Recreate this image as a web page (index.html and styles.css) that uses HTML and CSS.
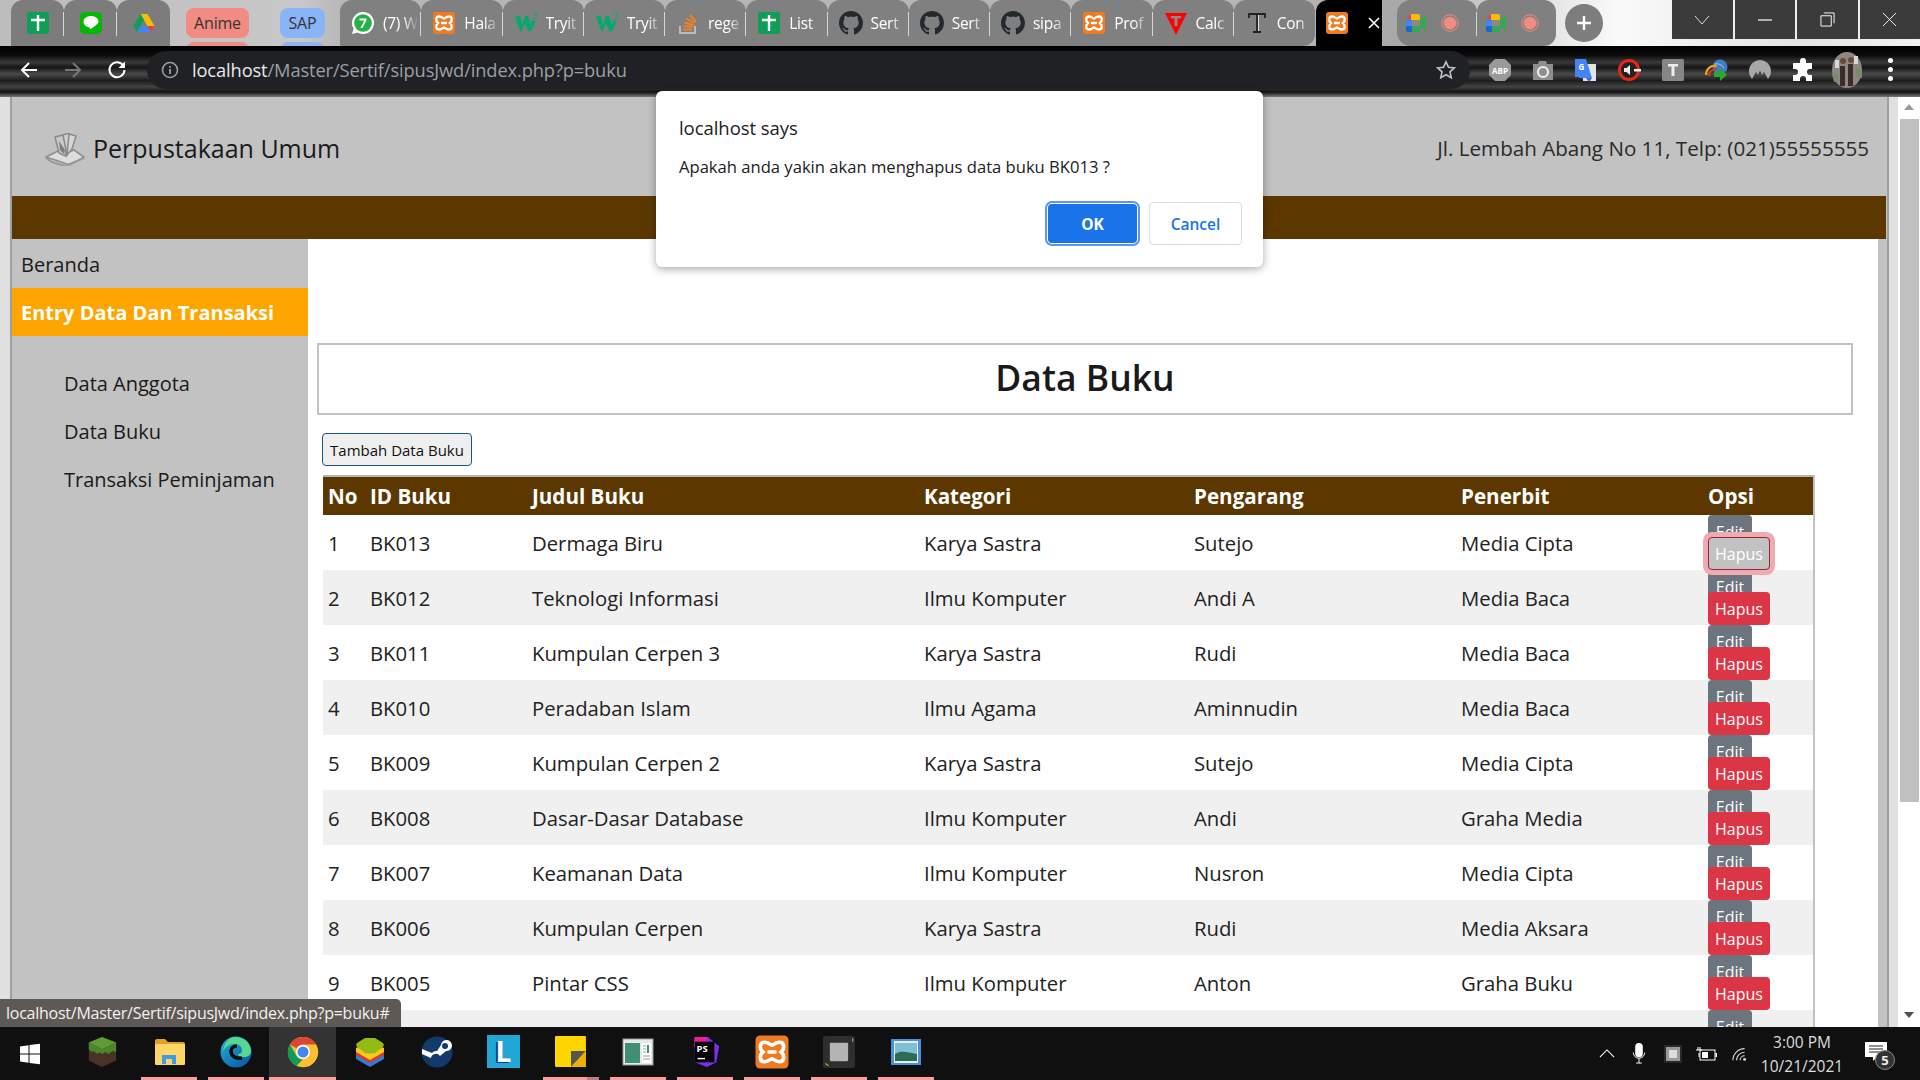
FILE: index.html
```html
<!DOCTYPE html>
<html lang="id">
<head>
<meta charset="utf-8">
<title>Perpustakaan Umum</title>
<link rel="stylesheet" href="styles.css">
</head>
<body>
<svg class="defs" aria-hidden="true">
  <symbol id="sheets" viewBox="0 0 24 24"><rect x="1" y="1" width="22" height="22" rx="2" fill="#0f9d58"/><path d="M12 4v16M5 9h14" stroke="#fff" stroke-width="2.4"/></symbol>
  <symbol id="xampp" viewBox="0 0 24 24"><rect x="1" y="1" width="22" height="22" rx="3" fill="#ef7a1f"/><path d="M7 5.500c3 0 4 2 5 2s2-2 5-2c3.500 0 3.500 4.500 1 6.500 2.500 2 2.500 6.500-1 6.500-3 0-4-2-5-2s-2 2-5 2c-3.500 0-3.500-4.500-1-6.500-2.500-2-2.500-6.500 1-6.500zM9 12h6" fill="none" stroke="#fff" stroke-width="2.400"/></symbol>
  <symbol id="github" viewBox="0 0 16 16"><path fill="#24292e" d="M8 0C3.58 0 0 3.58 0 8c0 3.54 2.290 6.530 5.470 7.590.4.070.55-.17.55-.38 0-.19-.01-.82-.01-1.490-2.010.37-2.530-.49-2.690-.94-.09-.23-.48-.94-.82-1.130-.28-.15-.68-.52-.01-.53.63-.01 1.080.58 1.230.82.72 1.210 1.870.87 2.330.66.070-.52.28-.87.51-1.070-1.780-.2-3.640-.89-3.640-3.950 0-.87.31-1.590.82-2.150-.08-.2-.36-1.020.08-2.120 0 0 .67-.21 2.200.82.64-.18 1.320-.27 2-.27s1.360.09 2 .27c1.530-1.040 2.200-.82 2.200-.82.44 1.100.16 1.920.08 2.120.51.56.82 1.270.82 2.150 0 3.070-1.870 3.750-3.650 3.950.29.25.54.73.54 1.480 0 1.070-.01 1.930-.01 2.200 0 .21.15.46.55.38A8.013 8.013 0 0016 8c0-4.420-3.580-8-8-8z"/></symbol>
  <symbol id="w3" viewBox="0 0 24 24"><path d="M1 5h5l2 9 3-9h3l3 9 1-5 4 1-5 10h-3l-3-8-3 8H6z" fill="#04aa6d"/><path d="M19 2h4v1l-2 1.500c1.500 0 2 1 1.500 2-.5 1-2 1-3 .5" fill="none" stroke="#04aa6d" stroke-width=".9"/></symbol>
  <symbol id="meet" viewBox="0 0 24 24"><path d="M2 8l5-5h9v6H8v6H2z" fill="#ea4335"/><path d="M2 8h6v7H2z" fill="#4285f4"/><path d="M2 15h6v6H4a2 2 0 01-2-2z" fill="#1967d2"/><path d="M8 15h8v6H8z" fill="#34a853"/><path d="M7 3h7a2 2 0 012 2v4H7z" fill="#fbbc04"/><path d="M16 9l6-5v16l-6-5z" fill="#34a853"/><rect x="8" y="9" width="8" height="6" fill="#8a8a8a"/></symbol>
  <symbol id="rec" viewBox="0 0 24 24"><circle cx="12" cy="12" r="11" fill="none" stroke="#f28b82" stroke-width="1.300"/><circle cx="12" cy="12" r="8.500" fill="#f28b82"/></symbol>
  <symbol id="chrome" viewBox="0 0 32 32"><circle cx="16" cy="16" r="15" fill="#fbc02d"/><path d="M16 1a15 15 0 0113 7.500H16a7.500 7.500 0 00-6.500 3.750L3 8.500A15 15 0 0116 1z" fill="#db4437"/><path d="M3 8.500l6.500 11.250A7.500 7.500 0 0016 23.500L9.500 30A15 15 0 013 8.500z" fill="#0f9d58"/><path d="M9.500 30l6.500-6.500a7.500 7.500 0 006.500-3.750L29 8.500A15 15 0 0114 31z" fill="#fbc02d"/><circle cx="16" cy="16" r="7" fill="#fff"/><circle cx="16" cy="16" r="5.500" fill="#4285f4"/></symbol>
</svg>

<div class="screen">
  <div class="tabstrip">
    <div class="tab pin"><svg class="fav"><use href="#sheets"/></svg></div>
    <div class="tab pin"><svg class="fav" viewBox="0 0 24 24"><rect x="1" y="1" width="22" height="22" rx="5" fill="#00b900"/><path d="M12 5c-4.500 0-7.500 2.600-7.500 5.800 0 3 2.500 5.200 6 5.700.6.100.3 1.600.6 1.800.4.200 4.400-2.500 6-4.200 1.500-1.400 2.400-2 2.400-3.300C19.500 7.600 16.500 5 12 5z" fill="#fff"/></svg></div>
    <div class="tab pin"><svg class="fav" viewBox="0 0 24 24"><path d="M8.500 3h7l7 12h-7z" fill="#fbbc04"/><path d="M8.500 3L1.500 15l3.500 6 7-12z" fill="#0f9d58"/><path d="M5 21h14l3.500-6h-14z" fill="#4285f4"/><path d="M15.500 15l3.500 6 3.500-6z" fill="#ea4335"/></svg></div>
    <div class="chips chips-anime"><span class="chip chip-pink">Anime</span><span class="chip chip-pink chip-ghost"></span></div>
    <div class="chips chips-sap"><span class="chip chip-blue">SAP</span><span class="chip chip-blue chip-ghost"></span></div>

    <div class="tab first-tab"><svg class="fav" viewBox="0 0 24 24"><path d="M12 1a11 11 0 00-9.400 16.700L1 23l5.500-1.500A11 11 0 1012 1z" fill="#fff"/><circle cx="12" cy="12" r="8.800" fill="#25b04a"/><path d="M8.500 7.500h7v1.500l-4 8h-2l3.800-7.500H8.500z" fill="#fff"/></svg><span class="tab-title">(7) W</span></div>
    <div class="tab"><svg class="fav"><use href="#xampp"/></svg><span class="tab-title">Hala</span></div>
    <div class="tab"><svg class="fav"><use href="#w3"/></svg><span class="tab-title">Tryit</span></div>
    <div class="tab"><svg class="fav"><use href="#w3"/></svg><span class="tab-title">Tryit</span></div>
    <div class="tab"><svg class="fav" viewBox="0 0 24 24"><path d="M4 15v7h15v-7" fill="none" stroke="#bcbbbb" stroke-width="2"/><path d="M7 18.500h9M7.500 15l9 1M8.500 11.500l9 2.500M10.500 7.500l8 4.500M14 4l6 7" stroke="#f48024" stroke-width="2" fill="none"/></svg><span class="tab-title">rege</span></div>
    <div class="tab"><svg class="fav"><use href="#sheets"/></svg><span class="tab-title">List</span></div>
    <div class="tab"><svg class="fav"><use href="#github"/></svg><span class="tab-title">Sert</span></div>
    <div class="tab"><svg class="fav"><use href="#github"/></svg><span class="tab-title">Sert</span></div>
    <div class="tab"><svg class="fav"><use href="#github"/></svg><span class="tab-title">sipa</span></div>
    <div class="tab"><svg class="fav"><use href="#xampp"/></svg><span class="tab-title">Prof</span></div>
    <div class="tab"><svg class="fav" viewBox="0 0 24 24"><path d="M1 2h22L12 24z" fill="#f00"/><path d="M7 5h10v2.500h-3.500V15h-3V7.500H7z" fill="#8a8a8a"/></svg><span class="tab-title">Calc</span></div>
    <div class="tab last-tab"><svg class="fav" viewBox="0 0 24 24"><path d="M4 7V3h16v4M12 3v18M8 21h8" fill="none" stroke="#222" stroke-width="1.800"/><path d="M13.500 4v16" stroke="#ddd" stroke-width="1"/></svg><span class="tab-title">Con</span></div>

    <div class="tab-active"><svg class="fav"><use href="#xampp"/></svg><svg class="tab-close" viewBox="0 0 12 12"><path d="M1 1l10 10M11 1L1 11" stroke="#fff" stroke-width="1.600"/></svg></div>

    <div class="tab meet meet-first"><svg class="fav"><use href="#meet"/></svg><svg class="rec"><use href="#rec"/></svg></div>
    <div class="tab meet last-tab"><svg class="fav"><use href="#meet"/></svg><svg class="rec"><use href="#rec"/></svg></div>

    <div class="newtab"><svg viewBox="0 0 18 18"><path d="M9 2v14M2 9h14" stroke="#fff" stroke-width="2.400"/></svg></div>

    <div class="winctl">
      <div class="winbtn"><svg viewBox="0 0 16 10"><path d="M1 1l7 8 7-8" fill="none" stroke="#ddd"/></svg></div>
      <div class="winbtn"><svg viewBox="0 0 16 10"><path d="M1 5h14" stroke="#fff" stroke-width="1.200"/></svg></div>
      <div class="winbtn"><svg class="win-tall" viewBox="0 0 16 16"><path d="M4 1h11v11M1 4h11v11H1z" fill="none" stroke="#fff"/></svg></div>
      <div class="winbtn"><svg class="win-tall" viewBox="0 0 16 16"><path d="M1 1l14 14M15 1L1 15" stroke="#fff"/></svg></div>
    </div>
  </div>

  <div class="toolbar">
    <div class="navbtn"><svg viewBox="0 0 20 20"><path d="M18 10H3M10 3l-7 7 7 7" fill="none" stroke="#fff" stroke-width="2"/></svg></div>
    <div class="navbtn"><svg viewBox="0 0 20 20"><path d="M2 10h15M10 3l7 7-7 7" fill="none" stroke="#777" stroke-width="2"/></svg></div>
    <div class="navbtn"><svg viewBox="0 0 20 20"><path d="M16.500 6A7.500 7.500 0 1017.500 10" fill="none" stroke="#fff" stroke-width="2"/><path d="M18 1.500V8h-6.500z" fill="#fff"/></svg></div>
    <div class="omnibox">
      <svg class="info" viewBox="0 0 18 18"><circle cx="9" cy="9" r="7.500" fill="none" stroke="#9aa0a6" stroke-width="1.600"/><path d="M9 8v5M9 5v1.800" stroke="#9aa0a6" stroke-width="1.800"/></svg>
      <div class="url"><span class="url-host">localhost</span>/Master/Sertif/sipusJwd/index.php?p=buku</div>
      <svg class="star" viewBox="0 0 20 20"><path d="M10 1.800l2.500 5.400 5.900.7-4.400 4 1.200 5.800-5.200-3-5.200 3 1.200-5.800-4.400-4 5.900-.7z" fill="none" stroke="#bdc1c6" stroke-width="1.600"/></svg>
    </div>
    <div class="exts">
      <div class="ext"><svg viewBox="0 0 24 24"><path d="M7 1h10l6 6v10l-6 6H7l-6-6V7z" fill="#9a9a9a"/><text x="12" y="15.500" class="ext-abp">ABP</text></svg></div>
      <div class="ext"><svg viewBox="0 0 24 24"><path d="M2 6h5l1-3h7l1 3h6v16H2z" fill="#8f8f8f"/><circle cx="12" cy="14" r="5" fill="none" stroke="#eee" stroke-width="2.200"/></svg></div>
      <div class="ext"><svg viewBox="0 0 24 24"><rect x="9" y="6" width="13" height="17" fill="#e4e4e4"/><path d="M1 1h11l6 19H6l-2-1H1z" fill="#4285f4"/><text x="7.500" y="12" class="ext-g">G</text><path d="M12 20l3 4 3-4z" fill="#3367d6"/></svg></div>
      <div class="ext"><svg viewBox="0 0 24 24"><circle cx="11" cy="12" r="9.500" fill="#222" stroke="#e8271c" stroke-width="3"/><path d="M6 10h2.500l3.500-3v10l-3.500-3H6z" fill="#eee"/><path d="M16 11h7v2.500h-7z" fill="#eee"/></svg></div>
      <div class="ext"><svg viewBox="0 0 24 24"><rect x="1" y="1" width="22" height="22" rx="1.500" fill="#868686"/><path d="M7 6h10v2.500h-3.500V18h-3V8.500H7z" fill="#eee"/></svg></div>
      <div class="ext"><svg viewBox="0 0 24 24"><circle cx="15" cy="9" r="7.500" fill="#3d7fc4"/><path d="M10 6c3-1 7 1 9 4" stroke="#bcd" fill="none"/><path d="M1 17c0-7 6-10 11-9" fill="none" stroke="#e5a11c" stroke-width="2.500"/><path d="M4 18c0-5 4-7 8-7" fill="none" stroke="#d33" stroke-width="2"/><path d="M9 14h6v-4l7 7-7 6v-4H9z" fill="#29a829"/></svg></div>
      <div class="ext"><svg viewBox="0 0 24 24"><path d="M12 2C6 2 1 7 1 13c0 3 1 5.500 3 8l4-7 2 3 2-4.500 2 4.500 2-3 4 7c2-2.500 3-5 3-8 0-6-5-11-11-11z" fill="#a8a8a8"/></svg></div>
      <div class="ext"><svg viewBox="0 0 24 24"><path d="M9 3a3 3 0 016 0v2h6v6h-2a3 3 0 000 6h2v6h-6v-2a3 3 0 00-6 0v2H2v-6h2a3 3 0 000-6H2V5h7z" fill="#fff"/></svg></div>
      <div class="ext ext-avatar"><svg viewBox="0 0 30 36"><ellipse cx="15" cy="18" rx="15" ry="18" fill="#8f8782"/><path d="M8 14h5v20H8zM16 12h5v22h-5z" fill="#3a2c28"/><circle cx="11" cy="9" r="3" fill="#6b4a3a"/><circle cx="19" cy="8" r="3" fill="#6b4a3a"/><path d="M0 22h6v8H2zM24 16h6v10h-6z" fill="#7a8a6a"/><path d="M22 4h4v8h-4zM3 8h4v8H3z" fill="#d8d8d8"/></svg></div>
      <div class="ext ext-dots"><span></span><span></span><span></span></div>
    </div>
  </div>

  <div class="viewport">
    <div class="gutter"></div>
    <div class="frame">
      <header class="site-head">
        <div class="brand">
          <svg class="logo" viewBox="0 0 40 33"><path d="M1 24l14-7 7 3 7-3 10 7-14 8z" fill="#dedede" stroke="#8e8e8e" stroke-width="1.600"/><path d="M1 25l6 4 13 4 19-8" fill="none" stroke="#9a9a9a" stroke-width="2"/><path d="M10 4l8-2 4 14-2 7-6-3z" fill="#c9c9c9" stroke="#8a8a8a" stroke-width="1.500"/><path d="M18 2l6-2 3 13-5 9z" fill="#d0d0d0" stroke="#8a8a8a" stroke-width="1.500"/><path d="M24 1l7 2-4 13-5 6z" fill="#d6d6d6" stroke="#8a8a8a" stroke-width="1.500"/><path d="M14 8l6 9-1 4-4-4z" fill="#7d7d7d"/></svg>
          <span class="brand-name">Perpustakaan Umum</span>
        </div>
        <div class="address">Jl. Lembah Abang No 11, Telp: (021)55555555</div>
      </header>
      <div class="brownbar"></div>
      <div class="layout">
        <nav class="sidebar">
          <a class="nav-item">Beranda</a>
          <a class="nav-item nav-active">Entry Data Dan Transaksi</a>
          <ul class="subnav">
            <li>Data Anggota</li>
            <li>Data Buku</li>
            <li>Transaksi Peminjaman</li>
          </ul>
        </nav>
        <main class="content">
          <h1 class="page-title">Data Buku</h1>
          <button class="add-btn">Tambah Data Buku</button>
          <table class="books">
            <colgroup><col class="c-no"><col class="c-id"><col class="c-judul"><col class="c-kat"><col class="c-peng"><col class="c-pen"><col class="c-op"></colgroup>
            <thead><tr><th>No</th><th>ID Buku</th><th>Judul Buku</th><th>Kategori</th><th>Pengarang</th><th>Penerbit</th><th>Opsi</th></tr></thead>
            <tbody>
              <tr><td>1</td><td>BK013</td><td>Dermaga Biru</td><td>Karya Sastra</td><td>Sutejo</td><td>Media Cipta</td><td class="ops"><a class="btn btn-edit">Edit</a><a class="btn btn-del btn-focus">Hapus</a></td></tr>
              <tr><td>2</td><td>BK012</td><td>Teknologi Informasi</td><td>Ilmu Komputer</td><td>Andi A</td><td>Media Baca</td><td class="ops"><a class="btn btn-edit">Edit</a><a class="btn btn-del">Hapus</a></td></tr>
              <tr><td>3</td><td>BK011</td><td>Kumpulan Cerpen 3</td><td>Karya Sastra</td><td>Rudi</td><td>Media Baca</td><td class="ops"><a class="btn btn-edit">Edit</a><a class="btn btn-del">Hapus</a></td></tr>
              <tr><td>4</td><td>BK010</td><td>Peradaban Islam</td><td>Ilmu Agama</td><td>Aminnudin</td><td>Media Baca</td><td class="ops"><a class="btn btn-edit">Edit</a><a class="btn btn-del">Hapus</a></td></tr>
              <tr><td>5</td><td>BK009</td><td>Kumpulan Cerpen 2</td><td>Karya Sastra</td><td>Sutejo</td><td>Media Cipta</td><td class="ops"><a class="btn btn-edit">Edit</a><a class="btn btn-del">Hapus</a></td></tr>
              <tr><td>6</td><td>BK008</td><td>Dasar-Dasar Database</td><td>Ilmu Komputer</td><td>Andi</td><td>Graha Media</td><td class="ops"><a class="btn btn-edit">Edit</a><a class="btn btn-del">Hapus</a></td></tr>
              <tr><td>7</td><td>BK007</td><td>Keamanan Data</td><td>Ilmu Komputer</td><td>Nusron</td><td>Media Cipta</td><td class="ops"><a class="btn btn-edit">Edit</a><a class="btn btn-del">Hapus</a></td></tr>
              <tr><td>8</td><td>BK006</td><td>Kumpulan Cerpen</td><td>Karya Sastra</td><td>Rudi</td><td>Media Aksara</td><td class="ops"><a class="btn btn-edit">Edit</a><a class="btn btn-del">Hapus</a></td></tr>
              <tr><td>9</td><td>BK005</td><td>Pintar CSS</td><td>Ilmu Komputer</td><td>Anton</td><td>Graha Buku</td><td class="ops"><a class="btn btn-edit">Edit</a><a class="btn btn-del">Hapus</a></td></tr>
              <tr><td></td><td></td><td></td><td></td><td></td><td></td><td class="ops"><a class="btn btn-edit">Edit</a></td></tr>
            </tbody>
          </table>
        </main>
      </div>
    </div>
    <div class="rail"></div>
    <div class="scrollbar">
      <div class="arrow-up"></div>
      <div class="thumb"></div>
      <div class="arrow-down"></div>
    </div>

    <div class="statusbubble">localhost/Master/Sertif/sipusJwd/index.php?p=buku#</div>
  </div>

  <div class="taskbar">
    <div class="start"><svg viewBox="0 0 22 22"><path d="M1 3.500l8.500-1.200v8.200H1zM10.500 2.100L21 .7v9.800H10.500zM1 11.500h8.500v8.200L1 18.500zM10.500 11.500H21v9.800l-10.500-1.400z" fill="#fff"/></svg></div>
    <div class="tb"><svg viewBox="0 0 32 34"><path d="M16 1l15 6v19l-15 7-14-7V7z" fill="#4a3323"/><path d="M16 1l15 6-15 7L2 7z" fill="#5f9b36"/><path d="M2 7l14 7v5l-3-2-2 2-4-3-2 1-3-3zM31 7L16 14v5l4-2 3 2 4-3 4 1z" fill="#4d862c"/></svg></div>
    <div class="tb tb-on"><svg viewBox="0 0 32 28"><path d="M2 3a2 2 0 012-2h8l3 3h15a2 2 0 012 2v20H2z" fill="#e0a420"/><rect x="2" y="6" width="30" height="21" rx="1" fill="#fdd765"/><path d="M9 26v-9h14v9h-4v-5h-6v5z" fill="#3f9be6"/></svg></div>
    <div class="tb tb-on"><svg viewBox="0 0 32 32"><defs><linearGradient id="edgeg" x1="0" y1="0" x2="1" y2="1"><stop offset="0" stop-color="#1fb6d4"/><stop offset="1" stop-color="#0a4fa3"/></linearGradient></defs><circle cx="16" cy="16" r="15.500" fill="url(#edgeg)"/><path d="M15 1c9 0 16 6 16 14 0 4-3 6-7 6-5 0-6-2-6-3 2 0 4-1 4-4 0-4-4-6-8-6-5 0-9 3-11 8C4 7 9 1 15 1z" fill="#55d890"/><path d="M22 22c-5 1-11-1-11-7 0-3 3-5 6-5" fill="none" stroke="#0b0b0b" stroke-width="3.500"/></svg></div>
    <div class="tb tb-on tb-active"><svg><use href="#chrome"/></svg></div>
    <div class="tb"><svg viewBox="0 0 32 32"><path d="M16 12l14 6v5L16 31 2 23v-5z" fill="#2a7fd8"/><path d="M16 9l14 6v4L16 27 2 19v-4z" fill="#e53329"/><path d="M16 6l14 6v4L16 24 2 16v-4z" fill="#f6c91c"/><path d="M11 2h10l8 5c1 1 1 3 0 4l-8 6c-3 1-7 1-10 0L3 11c-1-1-1-3 0-4z" fill="#92bb13"/></svg></div>
    <div class="tb"><svg viewBox="0 0 32 32"><circle cx="16" cy="16" r="15.500" fill="#14396b"/><path d="M1 18l9 4a5 5 0 019-2l6-5a5.500 5.500 0 10-5-6l-4 6a5 5 0 00-5 2L1 13z" fill="#fff"/><circle cx="24" cy="10" r="3" fill="#14396b"/></svg></div>
    <div class="tb"><span class="lapp">L</span></div>
    <div class="tb tb-on tb-split"><svg viewBox="0 0 30 30"><rect width="29" height="29" rx="1" fill="#ffd500"/><path d="M15 14h14L15 29z" fill="#555"/><path d="M29 14v15H15z" fill="#eeb000"/></svg></div>
    <div class="tb tb-on"><svg viewBox="0 0 32 28"><rect x="1" y="1" width="30" height="26" fill="#e8e8e8" stroke="#999"/><rect x="3" y="5" width="15" height="20" fill="#3e8f76"/><rect x="20" y="5" width="9" height="20" fill="#fff"/><path d="M25 7h2v8h-2z" fill="#3e8f76"/><path d="M21 8h3M21 11h3M21 14h3M21 18h7M21 21h7" stroke="#999"/></svg></div>
    <div class="tb tb-on"><svg viewBox="0 0 32 34"><path d="M5 1l14 0 12 10-3 17-10 5-13-5z" fill="#7b2ff0"/><path d="M5 1l14 0-3 8L4 12z" fill="#f21d9a"/><rect x="5" y="6" width="21" height="22" fill="#000"/><text x="7" y="17" class="ps-text">PS</text><path d="M8 24h8" stroke="#fff" stroke-width="1.500"/></svg></div>
    <div class="tb tb-on"><svg class="tb-big"><use href="#xampp"/></svg></div>
    <div class="tb tb-on"><svg viewBox="0 0 28 28"><rect width="28" height="28" rx="2" fill="#2e2e2e"/><rect x="6" y="6" width="16" height="16" rx="1" fill="#b4b4b4"/><path d="M2 24l3 2M26 2v3" stroke="#c9a227"/></svg></div>
    <div class="tb tb-on"><svg viewBox="0 0 32 28"><rect x="1" y="1" width="30" height="26" fill="#4a90d9"/><rect x="4" y="3" width="24" height="22" fill="#e8eef2"/><rect x="5" y="5" width="22" height="18" fill="#7fc0d6"/><path d="M5 16c6-4 12-2 22 0v7H5z" fill="#2e6b55"/></svg></div>

    <div class="tray">
      <svg class="t-chev" viewBox="0 0 18 10"><path d="M1 9l8-8 8 8" fill="none" stroke="#fff" stroke-width="1.200"/></svg>
      <svg class="t-mic" viewBox="0 0 14 22"><rect x="3" y="0" width="8" height="15" rx="4" fill="#fff"/><path d="M1 10a6 6 0 0012 0M7 16v5M4 21h6" fill="none" stroke="#fff"/></svg>
      <svg class="t-chip" viewBox="0 0 18 18"><rect width="18" height="18" fill="#2a2a25"/><rect x="2" y="2" width="14" height="14" fill="#999"/><rect x="5" y="5" width="8" height="8" fill="#ddd"/></svg>
      <svg class="t-batt" viewBox="0 0 22 14"><rect x="5" y="3" width="15" height="10" fill="none" stroke="#fff"/><rect x="7" y="5" width="6" height="6" fill="#fff"/><path d="M1 3h6M3 0v3M5 0v3M4 6v4" stroke="#fff"/><rect x="20.500" y="6" width="1.500" height="4" fill="#fff"/></svg>
      <svg class="t-wifi" viewBox="0 0 20 16"><path d="M1 15A13 13 0 0114 2M5 15a9 9 0 019-9M9 15a5 5 0 015-5" fill="none" stroke="#ddd" stroke-width="1.200"/><circle cx="14" cy="14" r="1.600" fill="#ddd"/></svg>
      <div class="clock"><div>3:00 PM</div><div>10/21/2021</div></div>
      <div class="notif">
        <svg viewBox="0 0 22 20"><path d="M0 0h22v15H12l-4 4v-4H0z" fill="#fff"/><path d="M4 4h14M4 7h14M4 10h14" stroke="#222"/></svg>
        <span class="notif-badge">5</span>
      </div>
    </div>
  </div>

  <div class="dialog" role="dialog">
    <div class="dlg-title">localhost says</div>
    <div class="dlg-msg">Apakah anda yakin akan menghapus data buku BK013 ?</div>
    <div class="dlg-actions">
      <button class="dlg-ok">OK</button>
      <button class="dlg-cancel">Cancel</button>
    </div>
  </div>
</div>
</body>
</html>
```

FILE: styles.css
```css
* { box-sizing: border-box; }
html, body { margin: 0; padding: 0; height: 100%; overflow: hidden; background: #000; }
body { font-family: "Open Sans", "Noto Sans", sans-serif; }
.defs { position: absolute; width: 0; height: 0; overflow: hidden; }
svg { display: block; }

.screen { width: 1920px; height: 1080px; display: flex; flex-direction: column; overflow: hidden; position: relative; }

/* Tab strip */
.tabstrip {
  height: 46px; flex: none; display: flex; align-items: stretch; padding-left: 11px; overflow: hidden;
  background:
    linear-gradient(90deg, #bcbcbc 0, #c8c8c8 300px, #b6b6b6 345px, #b6b6b6 1300px, #a8a8a8 1400px, #e8e8e8 1560px, #fafafa 1620px, #e2e2e2 1800px, #f2f2f2 1920px);
}
.tab {
  flex: 0 0 81.25px; position: relative; display: flex; align-items: center; gap: 8px;
  padding-left: 11px; background: #808080; border-radius: 12px 12px 0 0; color: #fff; overflow: hidden;
}
.tab::after { content: ""; position: absolute; right: 0; top: 12px; height: 24px; width: 1px; background: #d8d8d8; }
.tab.pin { flex-basis: 53px; padding-left: 15px; background: #7c7c7c; }
.tab.pin:nth-child(3)::after { display: none; }
.last-tab { border-radius: 12px 12px 12px 0; }
.last-tab::after { display: none; }
.fav { width: 24px; height: 24px; flex: none; }
.tab-title {
  font-size: 15.500px; white-space: nowrap; width: 36px; flex: none; letter-spacing: -.3px;
  -webkit-mask-image: linear-gradient(90deg, #000 55%, transparent 100%);
  mask-image: linear-gradient(90deg, #000 55%, transparent 100%);
}
.first-tab { margin-left: 15px; }
.chips { display: flex; flex-direction: column; gap: 4px; padding-top: 8px; }
.chips-anime { margin-left: 16px; width: 63px; }
.chips-sap { margin-left: 31px; width: 45px; }
.chip { display: block; height: 30px; flex: none; border-radius: 8px; text-align: center; font-size: 16px; line-height: 30px; color: #333; letter-spacing: -.2px; }
.chip-pink { background: #f28b82; }
.chip-blue { background: #8ab4f8; }
.tab-active {
  flex: 0 0 66px; margin-left: 1px; background: #000; display: flex; align-items: center; gap: 19px;
  padding-left: 9px; border-radius: 12px 0 0 0;
}
.tab-close { width: 12px; height: 12px; }
.meet { flex-basis: 79.5px; gap: 13px; padding-left: 7px; border-radius: 12px 12px 0 0; }
.meet-first { margin-left: 15px; border-radius: 14px 12px 0 14px; }
.meet.last-tab { border-radius: 12px 12px 12px 0; }
.rec { width: 18px; height: 18px; flex: none; }
.newtab {
  width: 38px; height: 38px; margin: 4px 0 0 9px; border-radius: 50%; background: #7d7d7d;
  display: flex; align-items: center; justify-content: center;
}
.newtab svg { width: 18px; height: 18px; }
.winctl { margin-left: auto; width: 248px; height: 39px; display: flex; background: #3b3b3b; }
.winbtn { flex: 1; display: flex; align-items: center; justify-content: center; border-right: 2px solid #eee; }
.winbtn:last-child { border-right: 0; }
.winbtn svg { width: 16px; height: 10px; }
.winbtn svg.win-tall { width: 15px; height: 15px; }

/* Toolbar */
.toolbar {
  height: 51px; flex: none; display: flex; align-items: center; padding-left: 7px; position: relative; padding-bottom: 4px;
  background: linear-gradient(180deg, #000 0, #0a0a0a 18%, #3a3a3a 32%, #161616 42%, #4a4a4a 55%, #1c1c1c 68%, #444 80%, #111 90%, #7a7a7a 100%);
}
.navbtn { width: 44px; display: flex; justify-content: center; flex: none; }
.navbtn svg { width: 20px; height: 20px; }
.omnibox {
  margin-left: 8px; width: 1323px; height: 38px; border-radius: 19px; background: #202124;
  display: flex; align-items: center; padding: 0 14px 0 14px; flex: none;
}
.info { width: 18px; height: 18px; flex: none; }
.url { margin-left: 13px; font-size: 18.300px; color: #9aa0a6; white-space: nowrap; flex: 1; letter-spacing: -.12px; }
.url-host { color: #e8eaed; }
.star { width: 20px; height: 20px; flex: none; }
.exts { display: flex; margin-left: 8px; align-items: center; }
.ext { width: 43.400px; display: flex; justify-content: center; flex: none; }
.ext svg { width: 24px; height: 24px; }
.ext-abp { font: 700 8px "Open Sans", sans-serif; fill: #fff; text-anchor: middle; }
.ext-g { font: 700 8px "Open Sans", sans-serif; fill: #fff; text-anchor: middle; }
.ext-avatar svg { width: 30px; height: 36px; }
.ext-dots { flex-direction: column; align-items: center; gap: 4px; }
.ext-dots span { width: 5px; height: 5px; border-radius: 50%; background: #fff; }

/* Page viewport */
.viewport { flex: 1; min-height: 0; display: flex; position: relative; background: #e0e0e0; overflow: hidden; }
.gutter { width: 12px; flex: none; background: #e0e0e0; border-right: 2px solid #9f9f9f; }
.frame { width: 1875px; flex: none; background: #c2c2c2; display: flex; flex-direction: column; color: #1a1a1a; }
.rail { width: 11px; flex: none; background: #e0e0e0; border-left: 2px solid #9f9f9f; }
.scrollbar { width: 22px; flex: none; background: #fff; display: flex; flex-direction: column; align-items: center; }
.arrow-up { width: 0; height: 0; margin-top: 7px; border: 5.500px solid transparent; border-top: 0; border-bottom: 6px solid #9a9a9a; }
.thumb { width: 19px; height: 683px; margin-top: 9px; background: #c0c0c0; }
.arrow-down { width: 0; height: 0; margin-top: auto; margin-bottom: 9px; border: 5.500px solid transparent; border-bottom: 0; border-top: 6px solid #505050; }

.site-head { height: 99px; flex: none; display: flex; align-items: center; justify-content: space-between; padding: 2px 18px 0 33px; }
.brand { display: flex; align-items: center; gap: 8px; }
.logo { width: 40px; height: 33px; margin-top: 4px; }
.brand-name { font-size: 25px; }
.address { font-size: 20.600px; color: #2a2a2a; }
.brownbar { height: 43px; flex: none; background: #5c3800; margin-right: 1px; }
.layout { flex: 1; min-height: 0; display: flex; padding-right: 9px; }
.sidebar { width: 296px; flex: none; font-size: 20px; }
.nav-item { display: block; height: 48px; line-height: 52px; padding-left: 9px; }
.nav-item:first-child { height: 49px; }
.nav-active { background: #ffa500; color: #fff; font-weight: 700; line-height: 50px; }
.subnav { list-style: none; margin: 0; padding: 23px 0 0 52px; }
.subnav li { height: 48px; line-height: 50px; }

.content { flex: 1; min-width: 0; background: #fff; padding: 104px 25px 0 9px; }
.page-title { margin: 0; height: 72px; border: 2px solid #c2c2c2; text-align: center; font-size: 35.500px; font-weight: 600; line-height: 64px; color: #1a1a1a; }
.add-btn {
  display: block; margin: 18px 0 0 5px; width: 150px; height: 33px; padding: 0; background: #efefef;
  border: 1px solid #15587f; border-radius: 4px; font: 15px "Open Sans", sans-serif; color: #111;
}
.books { margin: 9px 0 0 6px; width: 1492px; table-layout: fixed; border-collapse: separate; border-spacing: 0; border-top: 2px solid #b5b5b5; border-right: 2px solid #c2c2c2; font-size: 20.300px; }
.c-no { width: 42px; } .c-id { width: 162px; } .c-judul { width: 392px; } .c-kat { width: 270px; }
.c-peng { width: 267px; } .c-pen { width: 247px; } .c-op { width: 110px; }
.books th { background: #5c3800; color: #fff; height: 38px; padding: 0 5px 1px; text-align: left; font-weight: 700; font-size: 20.600px; }
.books td { height: 55px; padding: 1px 5px 0; color: #222; vertical-align: middle; white-space: nowrap; }
.books tbody tr:nth-child(even) td { background: #f0f0f0; }
.books td.ops { padding: 0 0 0 5px; vertical-align: top; }
.btn { display: block; height: 33px; border-radius: 4px; color: #fff; font-size: 16px; line-height: 35px; text-align: center; }
.btn-edit { width: 44px; background: #6c757d; }
.btn-del { width: 62px; margin-top: -11px; background: #dc3545; position: relative; }
.btn-focus { background: #c2c2c2; border: 1px solid #8a2a3a; line-height: 33px; box-shadow: 0 0 0 5px #f2aab2; }

/* Overlays */
.statusbubble {
  position: absolute; left: 0; bottom: 0; width: 401px; height: 28px; background: #5e5955; color: #f2f2f2;
  border-radius: 0 5px 0 0; font-size: 16px; line-height: 28px; padding-left: 6px; white-space: nowrap; letter-spacing: -.25px;
}
.dialog {
  position: absolute; left: 656px; top: 91px; width: 607px; height: 176px; background: #fff; border-radius: 6px;
  box-shadow: 0 2px 8px rgba(0,0,0,.35); padding: 23px 21px 0 23px; color: #202124;
}
.dlg-title { font-size: 18.500px; line-height: 28px; letter-spacing: -.05px; }
.dlg-msg { margin-top: 13px; font-size: 16.600px; line-height: 24px; }
.dlg-actions { position: absolute; right: 21px; bottom: 22px; display: flex; gap: 12px; align-items: center; }
.dlg-ok {
  width: 89px; height: 39px; border: 0; border-radius: 4px; background: #1a73e8; color: #fff; font: 700 15.500px "Open Sans", sans-serif;
  box-shadow: 0 0 0 1px #fff, 0 0 0 3px #5a95ee;
}
.dlg-cancel { width: 93px; height: 43px; background: #fff; border: 1px solid #dadce0; border-radius: 4px; color: #1a73e8; font: 600 15.500px "Open Sans", sans-serif; margin-left: 0; }

/* Taskbar */
.taskbar { height: 53px; flex: none; background: #101010; display: flex; align-items: stretch; }
.start { width: 68px; flex: none; display: flex; align-items: center; justify-content: center; padding-right: 8px; }
.start svg { width: 22px; height: 22px; }
.tb { width: 67px; flex: none; display: flex; align-items: center; justify-content: center; position: relative; padding-bottom: 4px; }
.tb svg { width: 32px; height: 32px; }
.tb svg.tb-big { width: 36px; height: 36px; }
.tb-on::after { content: ""; position: absolute; left: 5.500px; right: 5.500px; bottom: 0; height: 3px; background: #ff9d9d; }
.tb-active { background: #333; }
.tb-active::after { left: 0; right: 0; }
.tb-split::after { background: linear-gradient(90deg, #ff9d9d 78%, #c37c7c 78%); }
.lapp { width: 33px; height: 33px; background: #21a7d6; color: #fff; font: 700 28px/33px "Open Sans", sans-serif; text-align: center; text-shadow: -2px 1px 0 #0b3f8a; }
.ps-text { font: 700 10px "Open Sans", sans-serif; fill: #fff; }
.tray { margin-left: auto; display: flex; align-items: center; position: relative; padding-right: 15px; }
.t-chev { width: 16px; height: 9px; margin-right: 17px; }
.t-mic { width: 14px; height: 21px; margin-right: 18px; }
.t-chip { width: 18px; height: 18px; margin-right: 13px; }
.t-batt { width: 22px; height: 14px; margin-right: 15px; }
.t-wifi { width: 18px; height: 16px; margin-right: 4px; }
.clock { width: 96px; text-align: center; font-size: 15.500px; line-height: 24px; color: #ddd; margin-right: 5px; white-space: nowrap; }
.notif { width: 50px; height: 53px; position: relative; display: flex; align-items: center; justify-content: center; padding: 0 8px 4px 0; }
.notif svg { width: 22px; height: 20px; }
.notif-badge { position: absolute; left: 20px; top: 23px; width: 20px; height: 20px; border-radius: 50%; background: #333; border: 1px solid #888; color: #eee; font-size: 13px; font-weight: 700; line-height: 18px; text-align: center; }
```
